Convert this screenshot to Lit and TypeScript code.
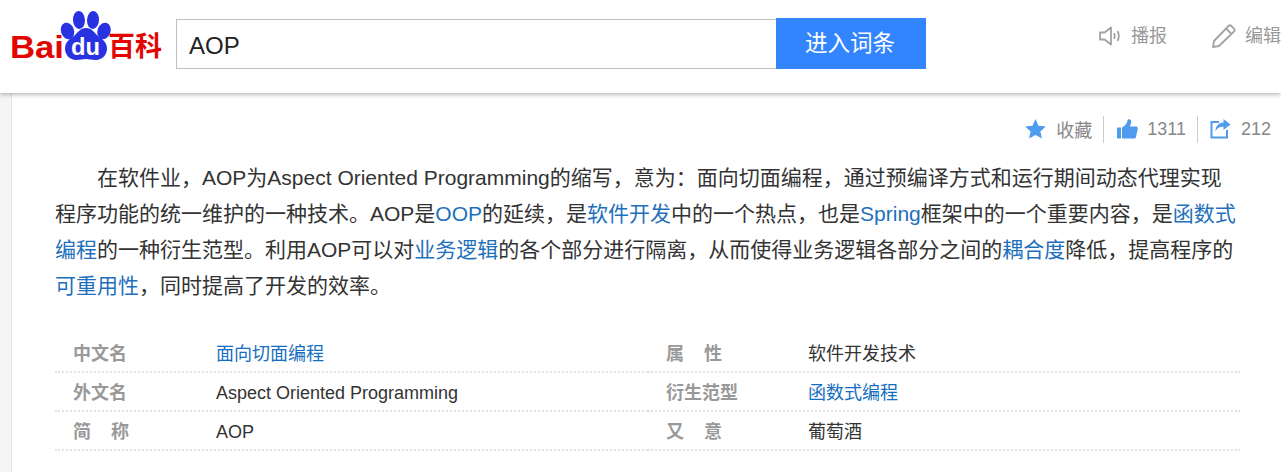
import { LitElement, html, css, svg } from "lit";
import { customElement } from "lit/decorators.js";

const logo = svg`<svg class="logo" width="154" height="52" viewBox="0 0 154 52">
  <g fill="#2932e1">
    <ellipse cx="70" cy="10" rx="6" ry="9" transform="rotate(-3 70 10)"/>
    <ellipse cx="84" cy="10" rx="6" ry="9" transform="rotate(3 84 10)"/>
    <ellipse cx="58.500" cy="21" rx="6.500" ry="8.500" transform="rotate(-20 58.500 21)"/>
    <ellipse cx="95" cy="21" rx="6.500" ry="8.500" transform="rotate(20 95 21)"/>
    <path d="M77 18c-6 0-8 4.500-11.500 7.500-3.500 3-9.500 6-9.500 13 0 6.500 5 11.500 11 11.500 4.500 0 7-1 10-1s5.500 1 10 1c6 0 11-5 11-11.500 0-7-6-10-9.500-13C85 22.500 83 18 77 18z"/>
  </g>
  <text class="bai" x="1" y="48" textLength="54" lengthAdjust="spacingAndGlyphs">Bai</text>
  <text class="du" x="62" y="45" textLength="29" lengthAdjust="spacingAndGlyphs">du</text>
  <text class="ke" x="99" y="46" textLength="54" lengthAdjust="spacingAndGlyphs">百科</text>
</svg>`;

const speaker = svg`<svg width="22" height="20" viewBox="0 0 22 20" fill="none" stroke="#a3a3a3" stroke-width="1.800"><path d="M1 6.500h4.500L12 1.500v17l-6.500-5H1z" stroke-linejoin="round"/><path d="M15 7c.9 2 .9 4 0 6M18.500 5c1.600 3 1.600 7 0 10"/></svg>`;
const pencil = svg`<svg width="24" height="24" viewBox="0 0 24 24" fill="none" stroke="#a3a3a3" stroke-width="1.800" stroke-linejoin="round"><path d="M1 23l1-6L16.500 2a2 2 0 0 1 2.800 0l2.700 2.700a2 2 0 0 1 0 2.800L7 22z"/><path d="M14 4.500l5.500 5.500"/></svg>`;
const star = svg`<svg width="21" height="20" viewBox="0 0 21 20"><path fill="#4f9cee" d="M10.500 0l3 6.700 7.300.8-5.400 4.900 1.500 7.100-6.400-3.600-6.400 3.600 1.500-7.100L.2 7.500l7.300-.8z"/></svg>`;
const thumb = svg`<svg width="21" height="20" viewBox="0 0 21 20"><path fill="#4f9cee" d="M0 8.500h4v11H0zM5 8.500c3-1.500 5.500-4.500 5.500-7.500 0-1 3.500-1.500 3.700 1.500.1 2-.7 3.700-1.200 5H19c1.500 0 2 1.300 1.700 2.500l-1.700 8c-.3 1-1 1.500-2 1.500H5z"/></svg>`;
const share = svg`<svg width="21" height="20" viewBox="0 0 21 20" fill="none"><path stroke="#4f9cee" stroke-width="2" d="M9 3H1.500v15.500H17V11"/><path fill="#4f9cee" d="M13.500 0l7 5.500-7 5.500V7.800c-4 0-6.500 1.200-8 4.700 0-5.500 3-8.500 8-9z"/></svg>`;

@customElement("app-root")
export class AppRoot extends LitElement {
  static styles = css`
    :host { display: block; width: 1281px; height: 472px; overflow: hidden; background: #f5f5f5;
      font-family: "Liberation Sans", "Noto Sans CJK SC", sans-serif; color: #333; }
    .header { height: 93px; background: #fff; box-shadow: 0 1px 5px rgba(0,0,0,.35); position: relative; z-index: 1;
      display: flex; align-items: flex-start; overflow: hidden; }
    .logo { display: block; margin: 10px 0 0 9px; flex: none; }
    .bai { font: bold 31px "Liberation Sans", sans-serif; fill: #e10601; }
    .du { font: bold 24px "Liberation Sans", sans-serif; fill: #fff; }
    .ke { font: bold 27px "Noto Sans CJK SC", sans-serif; fill: #e10601; }
    .search { display: flex; margin: 18px 0 0 13px; flex: none; }
    .input { box-sizing: border-box; width: 600px; height: 50px; margin-top: 1px; border: 1px solid #c1c1c1; border-right: 0;
      padding: 2px 0 0 12px; font-size: 24px; line-height: 48px; color: #222; }
    .go { box-sizing: border-box; width: 150px; height: 51px; padding-right: 2px; background: #3385ff; color: #fff; font-size: 22.500px; line-height: 51px; text-align: center; }
    .tools { display: flex; margin: 24px 0 0 173px; flex: none; color: #999; font-size: 18px; line-height: 24px; }
    .tool { display: flex; align-items: center; gap: 10px; width: 113px; flex: none; white-space: nowrap; }
    .tool + .tool { gap: 9px; }
    .page { box-sizing: border-box; margin-left: 11px; height: 379px; background: #fff; border-left: 1px solid #e6e6e6;
      padding: 22px 41px 0 43px; }
    .actions { display: flex; justify-content: flex-end; align-items: center; height: 28px; margin-right: -31px; font-size: 18px; color: #888; }
    .act { display: flex; align-items: center; gap: 10px; }
    .act.t { gap: 9px; }
    .act.s { gap: 10px; }
    .sep { width: 1px; height: 27px; background: #ccc; margin: 0 13px 0 11px; }
    .sep.b { margin: 0 12px 0 11px; }
    .sum { font-size: 21px; line-height: 36px; margin: 17px 0 0; text-indent: 42px; color: #333; width: 1185px; }
    a { color: #136ec2; text-decoration: none; }
    .sum a { color: #1e6fbc; }
    .table { display: grid; grid-template-columns: 593px 592px; margin-top: 30px; font-size: 18px; }
    .cell { display: grid; grid-template-columns: 161px 1fr; height: 39px; box-sizing: border-box; border-bottom: 2px dotted #e3e3e3;
      padding-top: 2px; line-height: 37px; }
    .cell > b { padding-left: 18px; color: #999; font-weight: bold; white-space: pre; }
    .cell.r { grid-template-columns: 160px 1fr; }
  `;

  row(k: string, v: unknown, right = false) {
    return html`<div class="cell ${right ? "r" : ""}"><b>${k}</b><span>${v}</span></div>`;
  }

  render() {
    const gap = "\u00a0\u00a0\u00a0\u00a0";
    return html`
      <div class="header">
        ${logo}
        <div class="search">
          <div class="input">AOP</div>
          <div class="go">进入词条</div>
        </div>
        <div class="tools">
          <div class="tool">${speaker}<span>播报</span></div>
          <div class="tool">${pencil}<span>编辑</span></div>
        </div>
      </div>
      <div class="page">
        <div class="actions">
          <div class="act">${star}<span>收藏</span></div>
          <div class="sep"></div>
          <div class="act t">${thumb}<span>1311</span></div>
          <div class="sep b"></div>
          <div class="act s">${share}<span>212</span></div>
        </div>
        <p class="sum">在软件业，AOP为Aspect Oriented Programming的缩写，意为：面向切面编程，通过预编译方式和运行期间动态代理实现程序功能的统一维护的一种技术。AOP是<a>OOP</a>的延续，是<a>软件开发</a>中的一个热点，也是<a>Spring</a>框架中的一个重要内容，是<a>函数式编程</a>的一种衍生范型。利用AOP可以对<a>业务逻辑</a>的各个部分进行隔离，从而使得业务逻辑各部分之间的<a>耦合度</a>降低，提高程序的<a>可重用性</a>，同时提高了开发的效率。</p>
        <div class="table">
          ${this.row("中文名", html`<a>面向切面编程</a>`)}
          ${this.row(`属${gap}性`, "软件开发技术", true)}
          ${this.row("外文名", "Aspect Oriented Programming")}
          ${this.row("衍生范型", html`<a>函数式编程</a>`, true)}
          ${this.row(`简${gap}称`, "AOP")}
          ${this.row(`又${gap}意`, "葡萄酒", true)}
        </div>
      </div>
    `;
  }
}
